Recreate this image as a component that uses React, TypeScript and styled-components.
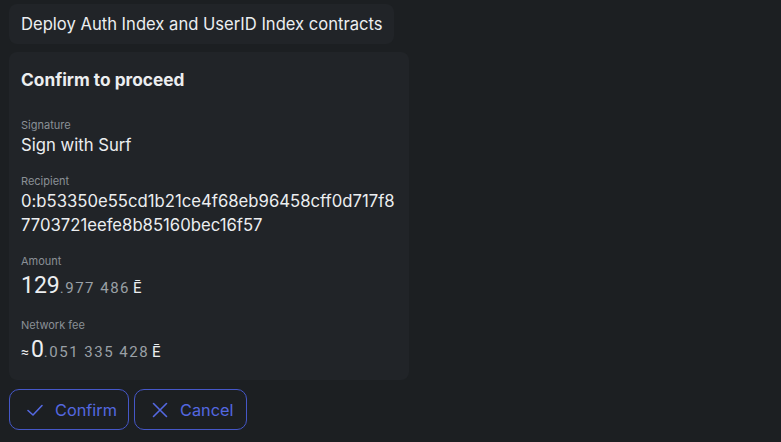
import styled, { createGlobalStyle } from "styled-components"

const GlobalStyle = createGlobalStyle`
    html, body {
        margin: 0;
        padding: 0;
        background: #1c1f22;
    }
    body {
        font-family: Inter, "Noto Sans", sans-serif;
        color: #e9ecef;
    }
`

const Colors = {
    Page: "#1c1f22",
    Card: "#212428",
    Text: "#eceef0",
    Label: "#8a9096",
    Dim: "#9aa0a6",
    Blue: "#5468e0",
    BlueBorder: "#4557c8",
}

function CheckIcon() {
    return (
        <svg width="20" height="20" viewBox="0 0 20 20" fill="none">
            <path
                d="M3 10.5 L8 15 L17 5.5"
                stroke="currentColor"
                strokeWidth="1.6"
                strokeLinecap="round"
                strokeLinejoin="round"
            />
        </svg>
    )
}

function CrossIcon() {
    return (
        <svg width="20" height="20" viewBox="0 0 20 20" fill="none">
            <path
                d="M3.5 3.5 L16.5 16.5 M16.5 3.5 L3.5 16.5"
                stroke="currentColor"
                strokeWidth="1.6"
                strokeLinecap="round"
            />
        </svg>
    )
}

function App() {
    return (
        <>
            <GlobalStyle />
            <Page>
                <Header>Deploy Auth Index and UserID Index contracts</Header>
                <Card>
                    <CardTitle>Confirm to proceed</CardTitle>
                    <Fields>
                        <Field>
                            <Label>Signature</Label>
                            <Value>Sign with Surf</Value>
                        </Field>
                        <Field>
                            <Label>Recipient</Label>
                            <Value>
                                0:b53350e55cd1b21ce4f68eb96458cff0d717f8
                                <br />
                                7703721eefe8b85160bec16f57
                            </Value>
                        </Field>
                        <Field>
                            <Label>Amount</Label>
                            <Amount>
                                <Whole>129</Whole>
                                <Fraction>.977 486</Fraction>
                                <Currency>Ē</Currency>
                            </Amount>
                        </Field>
                        <Field>
                            <Label>Network fee</Label>
                            <Amount>
                                <Approx>≈</Approx>
                                <Whole>0</Whole>
                                <Fraction>.051 335 428</Fraction>
                                <Currency>Ē</Currency>
                            </Amount>
                        </Field>
                    </Fields>
                </Card>
                <Actions>
                    <ActionButton $width={120}>
                        <CheckIcon />
                        Confirm
                    </ActionButton>
                    <ActionButton $width={113}>
                        <CrossIcon />
                        Cancel
                    </ActionButton>
                </Actions>
            </Page>
        </>
    )
}

export default App

const Page = styled.div`
    width: 781px;
    height: 442px;
    box-sizing: border-box;
    padding: 4px 9px 0;
    background: ${Colors.Page};
    display: flex;
    flex-direction: column;
    align-items: flex-start;
`

const Header = styled.div`
    width: 385px;
    height: 40px;
    box-sizing: border-box;
    padding: 0 12px;
    display: flex;
    align-items: center;
    background: ${Colors.Card};
    border-radius: 8px;
    font-size: 16.6px;
    color: ${Colors.Text};
    white-space: nowrap;
`

const Card = styled.div`
    width: 400px;
    margin-top: 8px;
    box-sizing: border-box;
    padding: 16px 12px 15px;
    background: ${Colors.Card};
    border-radius: 8px;
    display: flex;
    flex-direction: column;
    gap: 25px;
`

const CardTitle = styled.div`
    font-size: 17.3px;
    line-height: 24px;
    font-weight: 700;
    color: ${Colors.Text};
`

const Fields = styled.div`
    display: flex;
    flex-direction: column;
    gap: 16px;
`

const Field = styled.div`
    display: flex;
    flex-direction: column;
`

const Label = styled.div`
    font-size: 11px;
    line-height: 16px;
    color: ${Colors.Label};
`

const Value = styled.div`
    font-size: 16.7px;
    line-height: 24px;
    color: ${Colors.Text};
    white-space: nowrap;
`

const Amount = styled.div`
    height: 32px;
    display: flex;
    align-items: baseline;
    padding-top: 3px;
    box-sizing: border-box;
    line-height: 28px;
    font-family: Roboto, "Noto Sans", sans-serif;
    color: ${Colors.Text};
`

const Approx = styled.span`
    font-size: 14px;
    margin-right: 2px;
`

const Whole = styled.span`
    font-size: 23px;
`

const Fraction = styled.span`
    font-size: 15px;
    letter-spacing: 1.5px;
    color: ${Colors.Dim};
    margin-right: 3px;
`

const Currency = styled.span`
    font-size: 15px;
    color: ${Colors.Text};
`

const Actions = styled.div`
    margin-top: 9px;
    display: flex;
    gap: 5px;
`

const ActionButton = styled.button<{ $width: number }>`
    width: ${(p) => p.$width}px;
    height: 41px;
    box-sizing: border-box;
    padding: 0 0 0 15px;
    display: flex;
    align-items: center;
    gap: 10px;
    background: transparent;
    border: 1px solid ${Colors.BlueBorder};
    border-radius: 10px;
    font-family: Inter, "Noto Sans", sans-serif;
    font-size: 16.3px;
    color: ${Colors.Blue};
    cursor: pointer;
`
